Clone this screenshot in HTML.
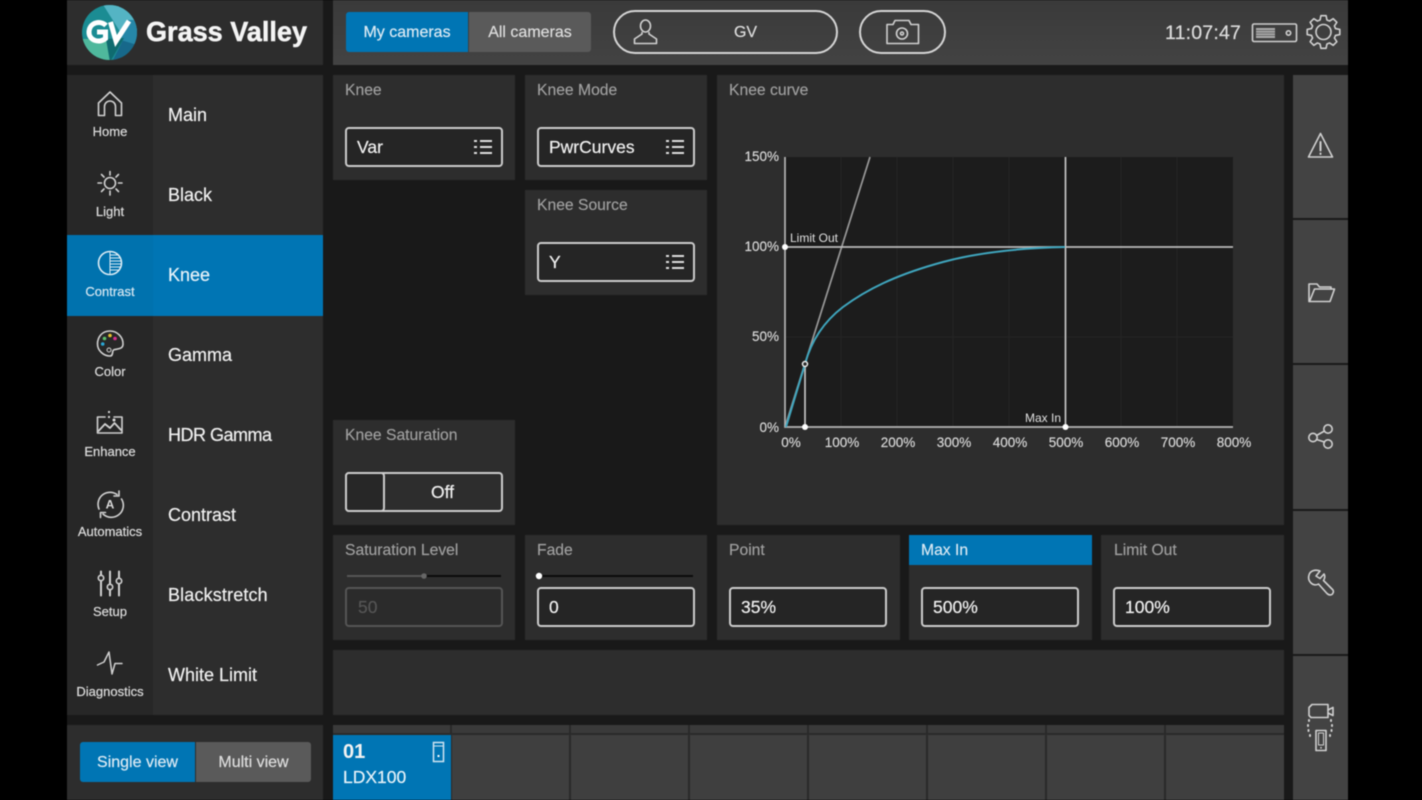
<!DOCTYPE html>
<html><head><meta charset="utf-8"><style>
html,body{margin:0;padding:0;width:1422px;height:800px;overflow:hidden;background:#000;font-family:"Liberation Sans",sans-serif}
body{filter:blur(.4px)}
div,span{position:absolute;box-sizing:border-box;white-space:nowrap}
#app{left:67px;top:0;width:1281px;height:800px;background:#191919;overflow:hidden}
.p{background:#2d2d2d}
.t{color:#f0f0f0;font-size:18px;line-height:20px;-webkit-text-stroke:.2px currentColor}
.l{color:#a0a0a0;font-size:15.700px;line-height:18px;-webkit-text-stroke:.15px currentColor}
.nav{color:#ddd;font-size:13px;line-height:14px;width:86px;left:67px;text-align:center;-webkit-text-stroke:.2px currentColor}
.box{border:2px solid #ccc;border-radius:4px;background:#252525;height:40px;width:158px}
.v{color:#f0f0f0;font-size:17.500px;line-height:20px;-webkit-text-stroke:.2px currentColor}
.side{left:1293px;width:55px;background:#434343}
.cell{top:735px;height:65px;width:117px;background:#3f3f3f}
.cellh{top:725px;height:8px;width:117px;background:#3a3a3a}
svg{position:absolute;overflow:visible}
.ic{fill:none;stroke:#d0d0d0;stroke-width:1.600;stroke-linejoin:round;stroke-linecap:round}
text{font-family:"Liberation Sans",sans-serif}
</style></head><body>
<div id="app"></div>

<!-- top bars -->
<div style="left:67px;top:0;width:256px;height:65px;background:#2d2d2d"></div>
<div style="left:333px;top:0;width:1015px;height:65px;background:linear-gradient(#3a3a3a,#434343)"></div>

<!-- logo -->
<svg style="left:0;top:0" width="340" height="65">
<defs><clipPath id="c"><circle cx="109.500" cy="32.500" r="27.500"/></clipPath></defs>
<g clip-path="url(#c)">
<rect x="80" y="3" width="60" height="60" fill="#1b8c93"/>
<path d="M102 3L140 3L140 34L124 38Z" fill="#54b4c4"/>
<path d="M124 38L140 30L140 62L112 62Z" fill="#17688a"/>
<path d="M127 20L140 20L140 46L121 40Z" fill="#2687a8"/>
<path d="M80 39L106 39L112 62L80 62Z" fill="#4fb89c"/>
<path d="M106 39L124 38L110 62Z" fill="#0f6b6f"/>
</g>
<path d="M106 25.500C101 20.500 90 21.500 89 31.500C88.500 41 100 43.500 105.500 38.500V32H97" fill="none" stroke="#fff" stroke-width="5"/>
<path d="M110.500 22L116 41L129 21" fill="none" stroke="#fff" stroke-width="5"/>
<text x="146" y="41" font-size="28" font-weight="700" fill="#f4f4f4" stroke="#f4f4f4" stroke-width=".5" textLength="161" lengthAdjust="spacingAndGlyphs">Grass Valley</text>
</svg>

<!-- top buttons -->
<div style="left:346px;top:12px;width:122px;height:40px;background:#0075b4;border-radius:3px 0 0 3px"></div>
<div style="left:469px;top:12px;width:122px;height:40px;background:#5a5a5a;border-radius:0 3px 3px 0"></div>
<div class="t" style="left:346px;top:23px;width:122px;text-align:center;font-size:16px;color:#dbeaf4">My cameras</div>
<div class="t" style="left:469px;top:23px;width:122px;text-align:center;font-size:16px;color:#ddd">All cameras</div>
<div style="left:613px;top:10px;width:225px;height:44px;border:2px solid #d5d5d5;border-radius:22px"></div>
<div class="t" style="left:613px;top:23px;width:265px;text-align:center;font-size:16px;color:#ddd">GV</div>
<div style="left:859px;top:10px;width:87px;height:44px;border:2px solid #d5d5d5;border-radius:22px"></div>
<svg style="left:0;top:0" width="1422" height="65" class="ic">
<ellipse cx="645.500" cy="26" rx="5" ry="6"/><path d="M642 32.500V34L634.500 39V43.500H656.500V39L649 34V32.500"/>
<path d="M887 24.500H893L895 20.500H909L911 24.500H918.500V43.500H887Z"/><circle cx="902" cy="33.500" r="5.500"/><circle cx="902" cy="33.500" r="1.500"/>
<rect x="1252.500" y="24" width="44" height="17.500" rx="1.500"/>
<path d="M1256 28H1275V38H1256Z" fill="#aaa" stroke="none"/>
<path d="M1256 30.500H1275M1256 33H1275M1256 35.500H1275" stroke="#555" stroke-width=".8"/>
<circle cx="1288.500" cy="33" r="2.200"/>
<g transform="translate(1323.500 32)">
<circle r="7.500"/>
<path d="M-2.580 -16.300L2.580 -16.300L3.450 -12L6.060 -10.930L9.700 -13.350L13.350 -9.700L10.930 -6.060L12 -3.450L16.300 -2.580L16.300 2.580L12 3.450L10.930 6.060L13.350 9.700L9.700 13.350L6.060 10.930L3.450 12L2.580 16.300L-2.580 16.300L-3.450 12L-6.060 10.930L-9.700 13.350L-13.350 9.700L-10.930 6.060L-12 3.450L-16.300 2.580L-16.300 -2.580L-12 -3.450L-10.930 -6.060L-13.350 -9.700L-9.700 -13.350L-6.060 -10.930L-3.450 -12Z"/>
</g>
</svg>
<div class="t" style="left:1165px;top:23px;font-size:19.500px;color:#ddd;letter-spacing:.2px">11:07:47</div>

<!-- left nav -->
<div style="left:67px;top:75px;width:86px;height:640px;background:#272727"></div>
<div style="left:153px;top:75px;width:170px;height:640px;background:#2d2d2d"></div>
<div style="left:67px;top:235px;width:86px;height:81px;background:#0072ae"></div>
<div style="left:153px;top:235px;width:170px;height:81px;background:#0075b4"></div>
<div class="t" style="left:168px;top:105px">Main</div>
<div class="t" style="left:168px;top:185px">Black</div>
<div class="t" style="left:168px;top:265px;color:#e6f2f9">Knee</div>
<div class="t" style="left:168px;top:345px">Gamma</div>
<div class="t" style="left:168px;top:425px;letter-spacing:-.5px">HDR Gamma</div>
<div class="t" style="left:168px;top:505px">Contrast</div>
<div class="t" style="left:168px;top:585px;letter-spacing:.15px">Blackstretch</div>
<div class="t" style="left:168px;top:665px">White Limit</div>
<div class="nav" style="top:125px">Home</div>
<div class="nav" style="top:205px">Light</div>
<div class="nav" style="top:285px;color:#d5e7f2">Contrast</div>
<div class="nav" style="top:365px">Color</div>
<div class="nav" style="top:445px">Enhance</div>
<div class="nav" style="top:525px">Automatics</div>
<div class="nav" style="top:605px">Setup</div>
<div class="nav" style="top:685px">Diagnostics</div>
<svg style="left:0;top:0" width="160" height="720" class="ic">
<path d="M98.500 103L110 92L121.500 103V115.500H115.500V106.500A5.500 5.500 0 0 0 104.500 106.500V115.500H98.500Z"/>
<circle cx="110" cy="183" r="5.500"/><path d="M110 171.500V175M110 191V195M98 183H101.500M118.500 183H122M101.500 174.500L104 177M116 189L118.500 191.500M118.500 174.500L116 177M104 189L101.500 191.500"/>
<circle cx="110" cy="263" r="11.500" stroke="#dcecf5"/><path d="M110 252.500V273.500M110 255H118M110 258H120M110 261H121M110 264H121M110 267H120.500M110 270H118" stroke="#dcecf5" stroke-width="1"/>
<path d="M110 331C102 331 97.500 337 97.500 344C97.500 351 104 356 110 356C113.500 356 112 351 113.500 350C116 348.500 122.500 350 123 344.500C123.500 337 117 331 110 331Z"/><circle cx="109" cy="350" r="2" stroke-width="1"/>
<circle cx="102.700" cy="344" r="1.800" fill="#2aa7d5" stroke="none"/><circle cx="104.500" cy="338.500" r="1.800" fill="#5cc36b" stroke="none"/><circle cx="110" cy="335.500" r="1.800" fill="#e8c12c" stroke="none"/><circle cx="115" cy="338.500" r="1.800" fill="#d8308d" stroke="none"/>
<path d="M105 417H97.500V433H122V417H114"/><path d="M98.500 431L105 424L110 428L114.500 423L121 430" stroke-width="1.800"/><circle cx="109" cy="412" r="1.100" fill="#ddd" stroke="none"/><circle cx="109" cy="417" r="1.100" fill="#ddd" stroke="none"/><circle cx="114" cy="420" r="1.500" fill="#ddd" stroke="none"/>
<path d="M99 509A12 12 0 0 1 117 494.500M121.500 499A12 12 0 0 1 103 514"/><path d="M119 491V496H114M100.500 517.500V512.500H105.500"/>
<text x="110" y="508.500" font-size="12" font-weight="700" fill="#ddd" stroke="none" text-anchor="middle">A</text>
<path d="M101 571.500V575M101 581.500V595.500M110 571.500V584M110 590.500V595.500M119 571.500V578M119 584.500V595.500" stroke-width="2"/><circle cx="101" cy="578" r="2.700"/><circle cx="110" cy="587" r="2.700"/><circle cx="119" cy="581" r="2.700"/>
<path d="M97.500 665L104 662L109 652L112 674L115 663.500H122" stroke-width="1.500"/>
</svg>

<!-- single/multi -->
<div class="p" style="left:67px;top:725px;width:256px;height:75px"></div>
<div style="left:80px;top:742px;width:115px;height:40px;background:#0075b4;border-radius:3px 0 0 3px"></div>
<div style="left:196px;top:742px;width:115px;height:40px;background:#5a5a5a;border-radius:0 3px 3px 0"></div>
<div class="t" style="left:80px;top:753px;width:115px;text-align:center;font-size:16px;color:#dbeaf4">Single view</div>
<div class="t" style="left:196px;top:753px;width:115px;text-align:center;font-size:16px;color:#ddd">Multi view</div>

<!-- panels -->
<div class="p" style="left:333px;top:75px;width:182px;height:105px"></div>
<div class="p" style="left:525px;top:75px;width:182px;height:105px"></div>
<div class="p" style="left:525px;top:190px;width:182px;height:105px"></div>
<div class="p" style="left:333px;top:420px;width:182px;height:105px"></div>
<div class="p" style="left:717px;top:75px;width:567px;height:450px"></div>
<div class="p" style="left:333px;top:535px;width:182px;height:105px"></div>
<div class="p" style="left:525px;top:535px;width:182px;height:105px"></div>
<div class="p" style="left:717px;top:535px;width:183px;height:105px"></div>
<div class="p" style="left:909px;top:535px;width:183px;height:105px"></div>
<div style="left:909px;top:535px;width:183px;height:30px;background:#0075b4"></div>
<div class="p" style="left:1101px;top:535px;width:183px;height:105px"></div>
<div class="p" style="left:333px;top:650px;width:951px;height:65px"></div>

<div class="l" style="left:345px;top:82px">Knee</div>
<div class="l" style="left:537px;top:82px">Knee Mode</div>
<div class="l" style="left:729px;top:82px">Knee curve</div>
<div class="l" style="left:537px;top:197px">Knee Source</div>
<div class="l" style="left:345px;top:427px">Knee Saturation</div>
<div class="l" style="left:345px;top:542px">Saturation Level</div>
<div class="l" style="left:537px;top:542px">Fade</div>
<div class="l" style="left:729px;top:542px">Point</div>
<div class="l" style="left:921px;top:542px;color:#dbeaf4">Max In</div>
<div class="l" style="left:1114px;top:542px">Limit Out</div>

<div class="box" style="left:345px;top:127px"></div>
<div class="box" style="left:537px;top:127px"></div>
<div class="box" style="left:537px;top:242px"></div>
<div class="box" style="left:345px;top:472px;background:#2d2d2d"></div>
<div class="box" style="left:345px;top:472px;width:40px;background:#272727"></div>
<div class="box" style="left:345px;top:587px;border-color:#555;background:#2b2b2b"></div>
<div class="box" style="left:537px;top:587px"></div>
<div class="box" style="left:729px;top:587px"></div>
<div class="box" style="left:921px;top:587px"></div>
<div class="box" style="left:1113px;top:587px"></div>
<div class="v" style="left:357px;top:137px">Var</div>
<div class="v" style="left:549px;top:137px">PwrCurves</div>
<div class="v" style="left:549px;top:252px">Y</div>
<div class="v" style="left:431px;top:482px">Off</div>
<div class="v" style="left:358px;top:597px;color:#555">50</div>
<div class="v" style="left:549px;top:597px">0</div>
<div class="v" style="left:741px;top:597px">35%</div>
<div class="v" style="left:933px;top:597px">500%</div>
<div class="v" style="left:1125px;top:597px">100%</div>

<!-- list icons, sliders -->
<svg style="left:0;top:0" width="1422" height="800">
<g fill="none" stroke="#ddd" stroke-width="2">
<path d="M474 141H477M480 141H492M474 147H477M480 147H492M474 153H477M480 153H492"/>
<path d="M666 141H669M672 141H684M666 147H669M672 147H684M666 153H669M672 153H684"/>
<path d="M666 256H669M672 256H684M666 262H669M672 262H684M666 268H669M672 268H684"/>
</g>
<path d="M347 576H424" stroke="#555" stroke-width="2"/><path d="M424 576H501" stroke="#0a0a0a" stroke-width="2"/><circle cx="424" cy="576" r="2.800" fill="#666"/>
<path d="M539 576H693" stroke="#0a0a0a" stroke-width="2"/><circle cx="539" cy="576" r="3.200" fill="#fff"/>

<!-- chart -->
<rect x="785" y="157" width="448" height="270" fill="#1c1c1c"/>
<g stroke="#242424" stroke-width="1">
<path d="M841 157V427M897 157V427M953 157V427M1009 157V427M1121 157V427M1177 157V427M785 337H1233"/>
</g>
<path d="M785 427L870 157" stroke="#999" stroke-width="1.700" fill="none"/>
<path d="M785 157V427H1233" stroke="#b5b5b5" stroke-width="1.700" fill="none"/>
<path d="M785 247H1233" stroke="#bbb" stroke-width="1.700" fill="none"/>
<path d="M1065.500 157V427" stroke="#c5c5c5" stroke-width="1.700" fill="none"/>
<path d="M805 364V427" stroke="#c5c5c5" stroke-width="1.700" fill="none"/>
<path d="M786 427L805 364C812 338 826 320 843 307C866 290 895 275 943 262C980 252 1020 248 1065 247" stroke="#3fa5bd" stroke-width="2" fill="none"/>
<circle cx="785" cy="247" r="3" fill="#fff"/><circle cx="805" cy="427" r="3" fill="#fff"/><circle cx="1065.500" cy="427" r="3" fill="#fff"/>
<circle cx="805" cy="364" r="2.500" fill="#2a2a2a" stroke="#eee" stroke-width="1.500"/>
<g font-size="13.500" fill="#d8d8d8" text-anchor="end" stroke="#d8d8d8" stroke-width=".15">
<text x="779" y="161">150%</text><text x="779" y="251">100%</text><text x="779" y="341">50%</text><text x="779" y="432">0%</text>
</g>
<g font-size="13.500" fill="#d8d8d8" text-anchor="middle" stroke="#d8d8d8" stroke-width=".15">
<text x="791" y="447">0%</text><text x="842" y="447">100%</text><text x="898" y="447">200%</text><text x="954" y="447">300%</text><text x="1010" y="447">400%</text><text x="1066" y="447">500%</text><text x="1122" y="447">600%</text><text x="1178" y="447">700%</text><text x="1234" y="447">800%</text>
</g>
<text x="790" y="242" font-size="12" fill="#e0e0e0">Limit Out</text>
<text x="1025" y="422" font-size="12" fill="#e0e0e0">Max In</text>
</svg>

<!-- side -->
<div class="side" style="top:75px;height:143px"></div>
<div class="side" style="top:220px;height:143px"></div>
<div class="side" style="top:365px;height:144px"></div>
<div class="side" style="top:511px;height:143px"></div>
<div class="side" style="top:656px;height:144px"></div>
<svg style="left:0;top:0" width="1422" height="800" class="ic">
<path d="M1320.500 133.500L1308.500 157H1332.500Z"/><path d="M1320.500 142V150.500M1320.500 153.500V154" stroke-width="2"/>
<path d="M1309 301.500V284H1317L1319.500 287H1331V289"/><path d="M1309.500 301.500L1314.500 289H1334.500L1330 301.500Z"/>
<circle cx="1313" cy="437.500" r="4.200"/><circle cx="1328" cy="429" r="4.200"/><circle cx="1328" cy="444" r="4.200"/><path d="M1316.500 435.500L1324.500 431M1316.500 439.500L1324.500 442"/>
<path d="M1320 571C1315 569 1310 571 1309 575C1308 578 1309 581 1311 583C1313 585 1316 585.500 1318.500 584L1327 593.500C1329 595.500 1332 595.500 1333 593C1334 591 1333 590 1332 589L1323.500 580.500C1325 578 1325 575.500 1324 574L1320 578.500L1316 576Z"/>
<path d="M1312 704.500H1328V717.500H1311L1309 715.500V707.500Z"/><path d="M1328 710L1333 707.500V715.500L1328 713"/>
<path d="M1309 720V721M1308 725V726M1308.500 730V731M1310 735V736M1331 720V721M1332 725V726M1331.500 730V731M1330 735V736" stroke-width="2"/>
<rect x="1316" y="730.500" width="10" height="20"/><path d="M1318.500 733H1323.500V745H1318.500Z" stroke-width="1"/><path d="M1321 747.500V748" stroke-width="1.500"/>
</svg>

<!-- bottom cells -->
<div style="left:333px;top:725px;width:951px;height:75px;background:#2a2a2a"></div>
<div class="cellh" style="left:333px"></div><div class="cellh" style="left:452px"></div><div class="cellh" style="left:571px"></div><div class="cellh" style="left:690px"></div><div class="cellh" style="left:809px"></div><div class="cellh" style="left:928px"></div><div class="cellh" style="left:1047px"></div><div class="cellh" style="left:1166px;width:118px"></div>
<div class="cell" style="left:333px;width:118px;background:#0075b4"></div><div class="cell" style="left:452px"></div><div class="cell" style="left:571px"></div><div class="cell" style="left:690px"></div><div class="cell" style="left:809px"></div><div class="cell" style="left:928px"></div><div class="cell" style="left:1047px"></div><div class="cell" style="left:1166px;width:118px"></div>
<div style="left:343px;top:741px;font-size:20px;font-weight:700;line-height:22px;color:#f2f2f2">01</div>
<div style="left:343px;top:767px;font-size:17.500px;line-height:20px;color:#e6f2f9;-webkit-text-stroke:.2px currentColor">LDX100</div>
<svg style="left:0;top:0" width="460" height="800"><rect x="433.500" y="742.500" width="10" height="19" fill="none" stroke="#cfe4f1" stroke-width="1.500"/><path d="M434 746H443" stroke="#cfe4f1"/><rect x="437.500" y="755" width="2" height="2" fill="#fff"/></svg>
</body></html>
